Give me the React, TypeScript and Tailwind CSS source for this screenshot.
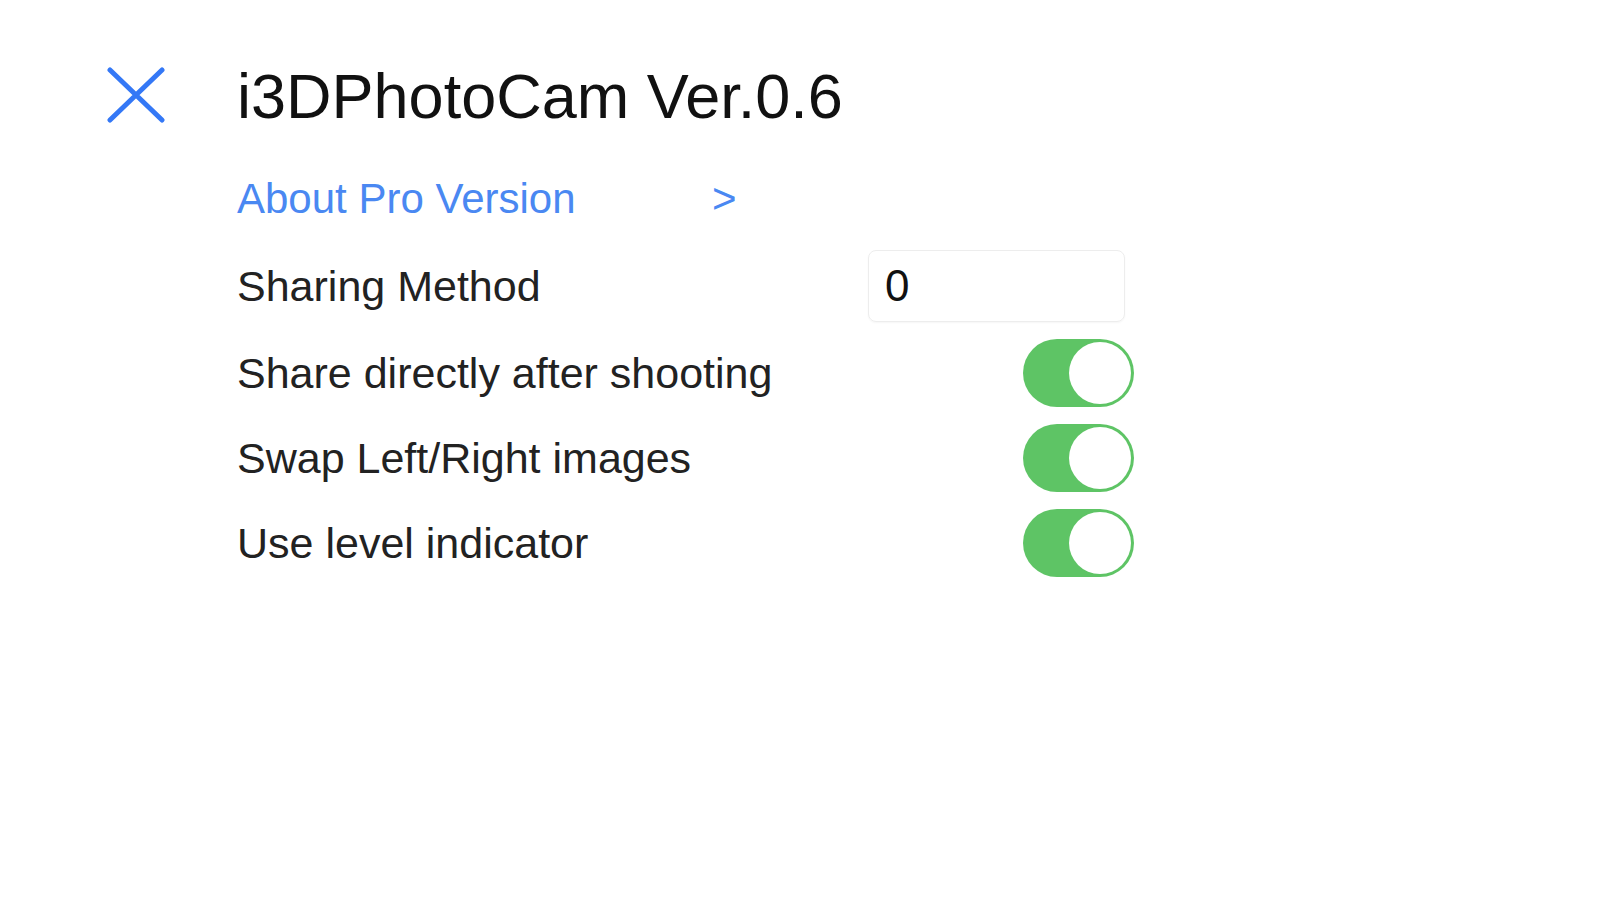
import type { FC } from 'react';

const settingToggles = [
	{ id: 'share-after-shooting', label: 'Share directly after shooting' },
	{ id: 'swap-images', label: 'Swap Left/Right images' },
	{ id: 'level-indicator', label: 'Use level indicator' },
];

const CloseIcon: FC = function CloseIcon() {
	return (
		<svg
			xmlns="http://www.w3.org/2000/svg"
			viewBox="0 0 58 56"
			className="mt-[6px] h-[56px] w-[58px] text-[#3478f6]"
		>
			<path
				d="M3 3 L55 53 M55 3 L3 53"
				stroke="currentColor"
				strokeWidth="5"
				strokeLinecap="round"
				fill="none"
			/>
		</svg>
	);
};

// iOS style switch, always on in this screen
const Toggle: FC = function Toggle() {
	return (
		<div className="flex h-[68px] w-[111px] items-center justify-end rounded-full bg-[#5ec465] p-[3px]">
			<div className="h-[62px] w-[62px] rounded-full bg-white" />
		</div>
	);
};

export default function App() {
	return (
		<div
			className="min-h-[900px] w-full bg-white pt-[61px] pl-[107px]"
			style={{ fontFamily: '"Liberation Sans", Arial, sans-serif' }}
		>
			<div className="flex items-start">
				<div className="w-[130px]">
					<CloseIcon />
				</div>
				<div className="text-[63px] leading-[71px] text-[#111111]">i3DPhotoCam Ver.0.6</div>
			</div>
			<div className="mt-[33px] ml-[130px] flex w-[897px] flex-col gap-[17px] text-[43px] leading-[48px] text-[#222222]">
				<div className="flex h-[68px] items-center text-[42px] text-[#4a88f2]">
					<span className="w-[475px]">About Pro Version</span>
					<span>&gt;</span>
				</div>
				<div className="flex h-[72px] items-center justify-between">
					<span>Sharing Method</span>
					<div className="mr-[9px] flex h-[72px] w-[257px] items-center rounded-[8px] border border-[#ededed] pl-[16px] text-[44px] text-[#111111] shadow-[0_1px_2px_rgba(0,0,0,0.04)]">
						0
					</div>
				</div>
				{settingToggles.map((setting) => (
					<div key={setting.id} className="flex h-[68px] items-center justify-between">
						<span>{setting.label}</span>
						<Toggle />
					</div>
				))}
			</div>
		</div>
	);
}
